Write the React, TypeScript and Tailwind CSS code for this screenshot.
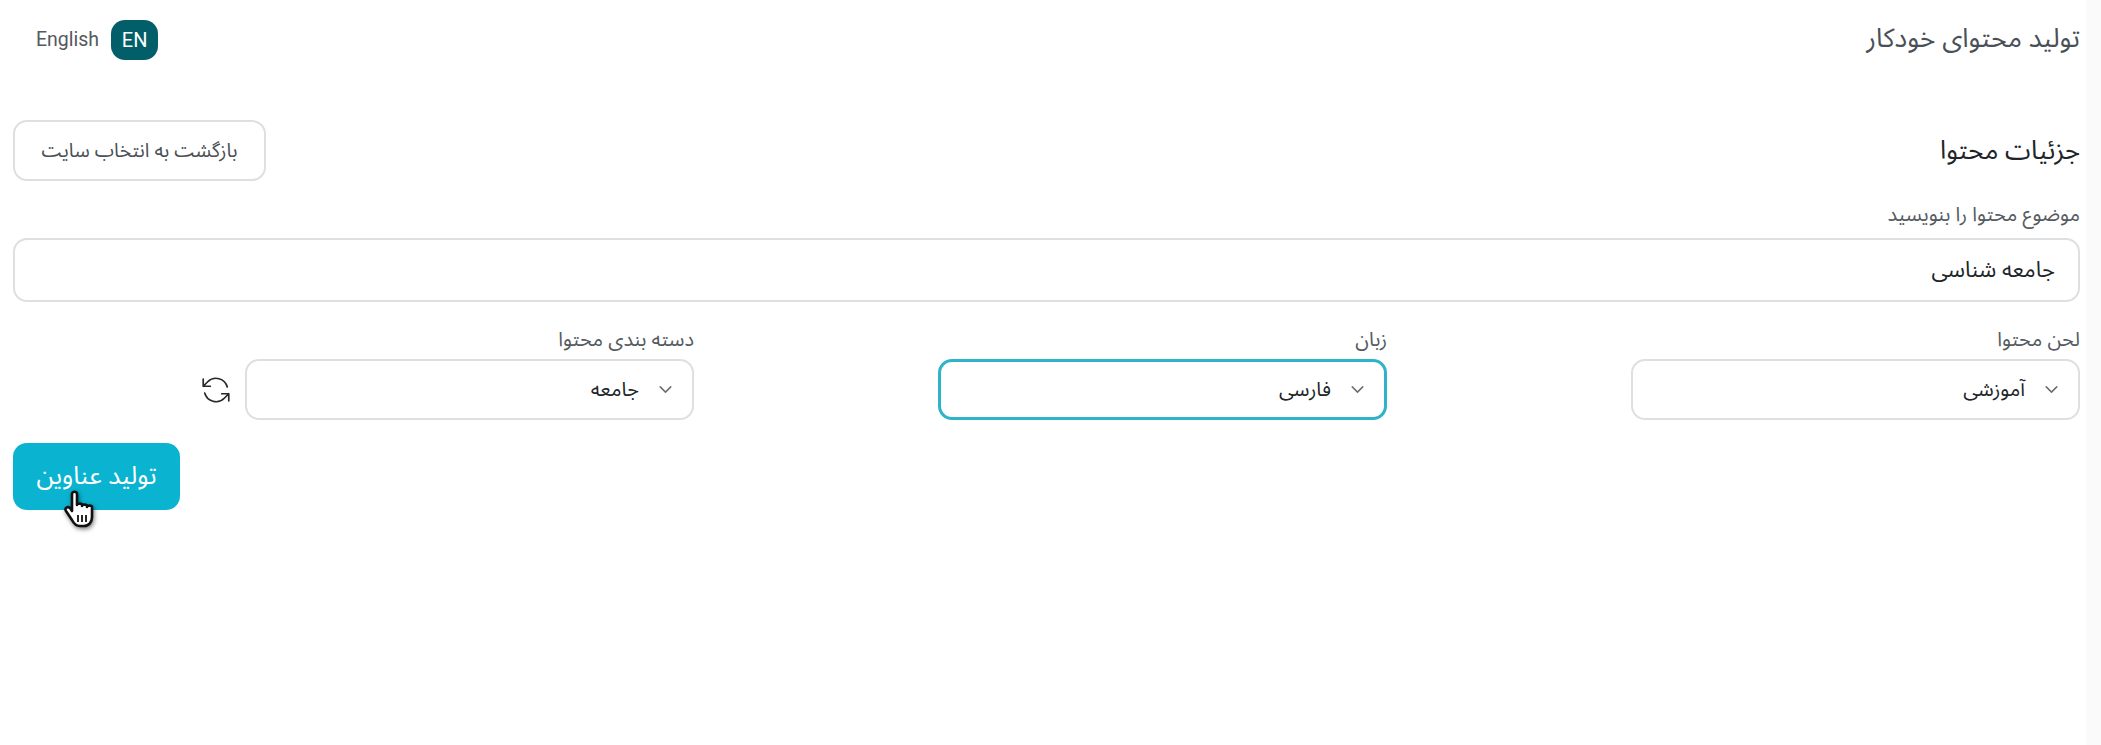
import { ChevronDown } from "lucide-react";

const font = "font-['Noto_Sans_Arabic','DejaVu_Sans',sans-serif]";
const latin = "font-['Roboto',sans-serif]";

function Select({ label, value, focused }: { label: string; value: string; focused?: boolean }) {
  return (
    <div className="flex w-[449px] flex-col">
      <label className="mb-[6px] h-[26px] text-[20px] leading-[26px] text-[#555b61]">{label}</label>
      <div
        className={`flex h-[61px] items-center rounded-[14px] bg-white pr-[16px] ${
          focused ? "border-[3px] border-[#2fb3c9]" : "border-2 border-[#dedfe1]"
        }`}
      >
        <ChevronDown className="h-[21px] w-[21px] text-[#6b7075]" strokeWidth={1.75} />
        <span className="mr-[16px] text-[20px] text-[#212529]">{value}</span>
      </div>
    </div>
  );
}

export default function App() {
  return (
    <div dir="rtl" className={`relative h-[745px] w-[2101px] overflow-hidden bg-white ${font}`}>
      <div className="absolute inset-y-0 left-[2086px] w-[15px] bg-[#fafafb]" />
      <div className="relative pl-[13px] pr-[21px]">
        <header className="flex h-[80px] items-center justify-between pl-[23px]">
          <h1 className="text-[26.5px] font-normal text-[#4a5057]">تولید محتوای خودکار</h1>
          <div dir="ltr" className="flex items-center gap-[12px]">
            <span className={`text-[19.5px] text-[#55595e] ${latin}`}>English</span>
            <span className={`flex h-[40px] w-[47px] items-center justify-center rounded-[14px] bg-[#025e68] text-[20px] text-white ${latin}`}>
              EN
            </span>
          </div>
        </header>

        <div className="mt-[40px] flex h-[61px] items-center justify-between">
          <h2 className="text-[26px] font-normal text-[#212529]">جزئیات محتوا</h2>
          <button className="flex h-[61px] w-[253px] items-center justify-center rounded-[14px] border-2 border-[#dedfe1] bg-white text-[19.5px] text-[#4a4f55]">
            بازگشت به انتخاب سایت
          </button>
        </div>

        <label className="mt-[22px] block h-[25px] text-[20px] leading-[25px] text-[#555b61]">موضوع محتوا را بنویسید</label>
        <div className="mt-[10px] flex h-[64px] items-center rounded-[14px] border-2 border-[#dedfe1] bg-white pr-[23px] text-[22px] text-[#212529]">
          جامعه شناسی
        </div>

        <div className="mt-[25px] flex items-end gap-[244px]">
          <Select label="لحن محتوا" value="آموزشی" />
          <Select label="زبان" value="فارسی" focused />
          <div className="flex items-end gap-[12px]">
            <Select label="دسته بندی محتوا" value="جامعه" />
            <button className="flex h-[61px] items-center text-[#27292c]" aria-label="refresh">
              <svg
                className="h-[34px] w-[34px] -scale-x-100"
                viewBox="0 0 24 24"
                fill="none"
                stroke="currentColor"
                strokeWidth={1.2}
                strokeLinecap="round"
                strokeLinejoin="round"
              >
                <path d="M16.023 9.348h4.992v-.001M2.985 19.644v-4.992m0 0h4.992m-4.993 0 3.181 3.183a8.25 8.25 0 0 0 13.803-3.7M4.031 9.865a8.25 8.25 0 0 1 13.803-3.7l3.181 3.182m0-4.991v4.99" />
              </svg>
            </button>
          </div>
        </div>

        <button className="relative mr-auto mt-[23px] flex h-[67px] w-[167px] items-center justify-center rounded-[14px] bg-[#0ab3d0] text-[25px] text-white">
          تولید عناوین
        </button>
      </div>

      <svg
        className="absolute left-[64px] top-[490px] drop-shadow-[1px_2px_2px_rgba(0,0,0,0.5)]"
        width="34"
        height="40"
        viewBox="0 0 34 40"
      >
        <path
          d="M8 4c0-3 5-3 5 0v11c0-2 5-2 5 0v1c0-2 5-2 5 0v1c0-2 5-2 5 0v10c0 5-3 9-8 9h-4c-4 0-6-2-8-6l-6-9c-2-3 2-5 4-3l2 3z"
          fill="#fff"
          stroke="#111"
          strokeWidth="2.6"
          strokeLinejoin="round"
        />
        <path d="M14 25v7M18 25v7M22 25v7" stroke="#111" strokeWidth="1.8" />
      </svg>
    </div>
  );
}
